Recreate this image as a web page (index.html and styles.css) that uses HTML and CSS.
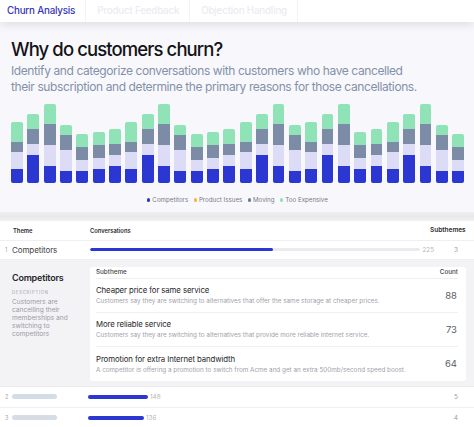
FILE: index.html
```html
<!DOCTYPE html>
<html lang="en">
<head>
<meta charset="utf-8">
<title>Churn Analysis</title>
<link rel="stylesheet" href="styles.css">
</head>
<body>
<div class="page">
  <nav class="tabs">
    <div class="tab active">Churn Analysis</div>
    <div class="tab">Product Feedback</div>
    <div class="tab">Objection Handling</div>
  </nav>

  <section class="hero">
    <h1 class="title">Why do customers churn?</h1>
    <p class="lead">Identify and categorize conversations with customers who have cancelled<br>their subscription and determine the primary reasons for those cancellations.</p>

    <div class="chart">
      <div class="bar"><span class="seg exp" style="height:20px"></span><span class="seg mov" style="height:10px"></span><span class="seg prod" style="height:17.6px"></span><span class="seg comp" style="height:13.7px"></span></div>
      <div class="bar"><span class="seg exp" style="height:15px"></span><span class="seg mov" style="height:14.7px"></span><span class="seg prod" style="height:11.3px"></span><span class="seg comp" style="height:27.7px"></span></div>
      <div class="bar"><span class="seg exp" style="height:20px"></span><span class="seg mov" style="height:20.7px"></span><span class="seg prod" style="height:20.7px"></span><span class="seg comp" style="height:17.3px"></span></div>
      <div class="bar"><span class="seg exp" style="height:9.7px"></span><span class="seg mov" style="height:15.3px"></span><span class="seg prod" style="height:20.7px"></span><span class="seg comp" style="height:12.3px"></span></div>
      <div class="bar"><span class="seg exp" style="height:13.3px"></span><span class="seg mov" style="height:13px"></span><span class="seg prod" style="height:10.4px"></span><span class="seg comp" style="height:12.3px"></span></div>
      <div class="bar"><span class="seg exp" style="height:12.7px"></span><span class="seg mov" style="height:13px"></span><span class="seg prod" style="height:11.6px"></span><span class="seg comp" style="height:13.7px"></span></div>
      <div class="bar"><span class="seg exp" style="height:15px"></span><span class="seg mov" style="height:11.6px"></span><span class="seg prod" style="height:10.4px"></span><span class="seg comp" style="height:17.3px"></span></div>
      <div class="bar"><span class="seg exp" style="height:20px"></span><span class="seg mov" style="height:10px"></span><span class="seg prod" style="height:17.6px"></span><span class="seg comp" style="height:13.7px"></span></div>
      <div class="bar"><span class="seg exp" style="height:15px"></span><span class="seg mov" style="height:14.7px"></span><span class="seg prod" style="height:11.3px"></span><span class="seg comp" style="height:27.7px"></span></div>
      <div class="bar"><span class="seg exp" style="height:20px"></span><span class="seg mov" style="height:20.7px"></span><span class="seg prod" style="height:20.7px"></span><span class="seg comp" style="height:17.3px"></span></div>
      <div class="bar"><span class="seg exp" style="height:9.7px"></span><span class="seg mov" style="height:15.3px"></span><span class="seg prod" style="height:20.7px"></span><span class="seg comp" style="height:12.3px"></span></div>
      <div class="bar"><span class="seg exp" style="height:13.3px"></span><span class="seg mov" style="height:13px"></span><span class="seg prod" style="height:10.4px"></span><span class="seg comp" style="height:12.3px"></span></div>
      <div class="bar"><span class="seg exp" style="height:12.7px"></span><span class="seg mov" style="height:13px"></span><span class="seg prod" style="height:11.6px"></span><span class="seg comp" style="height:13.7px"></span></div>
      <div class="bar"><span class="seg exp" style="height:15px"></span><span class="seg mov" style="height:11.6px"></span><span class="seg prod" style="height:10.4px"></span><span class="seg comp" style="height:17.3px"></span></div>
      <div class="bar"><span class="seg exp" style="height:20px"></span><span class="seg mov" style="height:10px"></span><span class="seg prod" style="height:17.6px"></span><span class="seg comp" style="height:13.7px"></span></div>
      <div class="bar"><span class="seg exp" style="height:15px"></span><span class="seg mov" style="height:14.7px"></span><span class="seg prod" style="height:11.3px"></span><span class="seg comp" style="height:27.7px"></span></div>
      <div class="bar"><span class="seg exp" style="height:20px"></span><span class="seg mov" style="height:20.7px"></span><span class="seg prod" style="height:20.7px"></span><span class="seg comp" style="height:17.3px"></span></div>
      <div class="bar"><span class="seg exp" style="height:9.7px"></span><span class="seg mov" style="height:15.3px"></span><span class="seg prod" style="height:20.7px"></span><span class="seg comp" style="height:12.3px"></span></div>
      <div class="bar"><span class="seg exp" style="height:20px"></span><span class="seg mov" style="height:10px"></span><span class="seg prod" style="height:17.6px"></span><span class="seg comp" style="height:13.7px"></span></div>
      <div class="bar"><span class="seg exp" style="height:15px"></span><span class="seg mov" style="height:14.7px"></span><span class="seg prod" style="height:11.3px"></span><span class="seg comp" style="height:27.7px"></span></div>
      <div class="bar"><span class="seg exp" style="height:20px"></span><span class="seg mov" style="height:20.7px"></span><span class="seg prod" style="height:20.7px"></span><span class="seg comp" style="height:17.3px"></span></div>
      <div class="bar"><span class="seg exp" style="height:12.7px"></span><span class="seg mov" style="height:13px"></span><span class="seg prod" style="height:11.6px"></span><span class="seg comp" style="height:13.7px"></span></div>
      <div class="bar"><span class="seg exp" style="height:15px"></span><span class="seg mov" style="height:11.6px"></span><span class="seg prod" style="height:10.4px"></span><span class="seg comp" style="height:17.3px"></span></div>
      <div class="bar"><span class="seg exp" style="height:20px"></span><span class="seg mov" style="height:10px"></span><span class="seg prod" style="height:17.6px"></span><span class="seg comp" style="height:13.7px"></span></div>
      <div class="bar"><span class="seg exp" style="height:15px"></span><span class="seg mov" style="height:14.7px"></span><span class="seg prod" style="height:11.3px"></span><span class="seg comp" style="height:27.7px"></span></div>
      <div class="bar"><span class="seg exp" style="height:20px"></span><span class="seg mov" style="height:20.7px"></span><span class="seg prod" style="height:20.7px"></span><span class="seg comp" style="height:17.3px"></span></div>
      <div class="bar"><span class="seg exp" style="height:9.7px"></span><span class="seg mov" style="height:15.3px"></span><span class="seg prod" style="height:20.7px"></span><span class="seg comp" style="height:12.3px"></span></div>
      <div class="bar"><span class="seg exp" style="height:13.3px"></span><span class="seg mov" style="height:13px"></span><span class="seg prod" style="height:10.4px"></span><span class="seg comp" style="height:12.3px"></span></div>
    </div>

    <div class="legend">
      <span class="legend-item"><i class="dot comp"></i>Competitors</span>
      <span class="legend-item"><i class="dot issue"></i>Product Issues</span>
      <span class="legend-item"><i class="dot mov"></i>Moving</span>
      <span class="legend-item"><i class="dot exp"></i>Too Expensive</span>
    </div>
  </section>

  <div class="band"></div>

  <section class="table">
    <div class="row head">
      <span class="num"></span>
      <span class="theme">Theme</span>
      <span class="conv">Conversations</span>
      <span class="subs">Subthemes</span>
    </div>

    <div class="row first">
      <span class="num">1</span>
      <span class="theme name">Competitors</span>
      <span class="conv">
        <span class="track"><span class="fill" style="width:55.5%"></span></span>
        <span class="val">225</span>
      </span>
      <span class="subs">3</span>
    </div>

    <div class="detail">
      <div class="detail-side">
        <div class="detail-title">Competitors</div>
        <div class="detail-label">DESCRIPTION</div>
        <div class="detail-text">Customers are<br>cancelling their<br>memberships and<br>switching to<br>competitors</div>
      </div>
      <div class="sub-card">
        <div class="sub-head"><span>Subtheme</span><span>Count</span></div>
        <div class="sub-item">
          <div class="sub-body">
            <div class="sub-title">Cheaper price for same service</div>
            <div class="sub-desc">Customers say they are switching to alternatives that offer the same storage at cheaper prices.</div>
          </div>
          <div class="sub-count">88</div>
        </div>
        <div class="sub-item">
          <div class="sub-body">
            <div class="sub-title">More reliable service</div>
            <div class="sub-desc">Customers say they are switching to alternatives that provide more reliable internet service.</div>
          </div>
          <div class="sub-count">73</div>
        </div>
        <div class="sub-item">
          <div class="sub-body">
            <div class="sub-title">Promotion for extra Internet bandwidth</div>
            <div class="sub-desc">A competitor is offering a promotion to switch from Acme and get an extra 500mb/second speed boost.</div>
          </div>
          <div class="sub-count">64</div>
        </div>
      </div>
    </div>

    <div class="row short">
      <span class="num">2</span>
      <span class="theme"><span class="skeleton"></span></span>
      <span class="conv"><span class="solo" style="width:60px"></span><span class="val">148</span></span>
      <span class="subs">5</span>
    </div>
    <div class="row short last">
      <span class="num">3</span>
      <span class="theme"><span class="skeleton"></span></span>
      <span class="conv"><span class="solo" style="width:56px"></span><span class="val">136</span></span>
      <span class="subs">4</span>
    </div>
  </section>
</div>
</body>
</html>
```

FILE: styles.css
```css
* { box-sizing: border-box; margin: 0; padding: 0; }

html, body {
  width: 474px;
  height: 427px;
  overflow: hidden;
  background: #ffffff;
}

body {
  font-family: Inter, "Noto Sans", "Liberation Sans", sans-serif;
  color: #18181b;
}

.page {
  display: flex;
  flex-direction: column;
}

/* Tabs */
.tabs {
  display: flex;
  height: 22px;
  align-items: center;
  background: #ffffff;
  position: relative;
  z-index: 2;
  box-shadow: 0 3px 9px rgba(0, 0, 0, 0.1);
}

.tab {
  font-size: 9.8px;
  font-weight: 500;
  letter-spacing: -0.2px;
  color: #ebebf0;
  padding: 0 10px 0 11px;
  border-right: 1px solid #f3f3f6;
  line-height: 22px;
}

.tab.active {
  color: #3535b8;
  padding-left: 7px;
}

/* Hero */
.hero {
  background: #f8f8fc;
  padding: 15.4px 10px 7px 11px;
  display: flex;
  flex-direction: column;
}

.title {
  font-size: 18.5px;
  line-height: 24px;
  font-weight: 500;
  letter-spacing: -0.9px;
  color: #131316;
}

.lead {
  margin-top: 1.6px;
  font-size: 12px;
  line-height: 16px;
  letter-spacing: -0.4px;
  color: #8391a9;
  white-space: nowrap;
}

.chart {
  margin-top: 8px;
  height: 80px;
  display: flex;
  align-items: flex-end;
  gap: 4.5px;
}

.bar {
  flex: 1;
  display: flex;
  flex-direction: column;
  border-radius: 2px;
  overflow: hidden;
}

.seg { display: block; width: 100%; }
.seg.exp { background: #8fe3b6; }
.seg.mov { background: #7c8ca6; }
.seg.prod { background: #dcdcf7; }
.seg.comp { background: #2c36d1; }

.legend {
  margin-top: 12px;
  height: 10px;
  display: flex;
  justify-content: center;
  align-items: center;
  gap: 5.5px;
  font-size: 6.2px;
  color: #7a7a85;
}

.legend-item {
  display: flex;
  align-items: center;
  gap: 2px;
}

.dot {
  display: inline-block;
  width: 3.2px;
  height: 3.2px;
  border-radius: 50%;
}

.dot.comp { background: #2c36d1; }
.dot.issue { background: #f3b63e; }
.dot.mov { background: #6e7c93; }
.dot.exp { background: #8fe3b6; }

.band {
  height: 9px;
  background: linear-gradient(180deg, #efeff2 0%, #e8e8eb 50%, #f1f1f3 100%);
}

/* Table */
.table {
  background: #ffffff;
  display: flex;
  flex-direction: column;
}

.row {
  display: grid;
  grid-template-columns: 12px 76px minmax(0, 1fr) 31px;
  align-items: center;
  height: 19px;
  border-bottom: 1px solid #efeff2;
  padding-right: 13px;
}

.row.head {
  height: 20px;
  font-size: 5.8px;
  font-weight: 600;
  color: #2a2a30;
}

.row.head .theme { padding-left: 1px; }
.row.head .conv { padding-left: 2px; }

.num {
  font-size: 5.5px;
  color: #a5a5ad;
  padding-left: 5px;
}

.name {
  font-size: 8px;
  color: #3f3f46;
  letter-spacing: -0.1px;
}

.conv {
  display: flex;
  align-items: center;
  gap: 2px;
  min-width: 0;
}

.row.first .conv {
  padding-left: 2px;
  margin-right: -4px;
}

.subs {
  text-align: right;
  font-size: 6.5px;
  color: #a0a0a8;
  padding-right: 3px;
}

.row.head .subs {
  color: #2a2a30;
  padding-right: 0;
}

.track {
  display: block;
  flex: 1;
  height: 3px;
  border-radius: 2px;
  background: #ebebef;
  overflow: hidden;
}

.fill {
  display: block;
  height: 100%;
  background: #2c36d1;
  border-radius: 2px;
}

.val {
  font-size: 6.3px;
  color: #b5b5bd;
}

/* Detail */
.detail {
  display: flex;
  background: #f3f3f6;
  padding: 7px 8px 5px 12px;
  border-bottom: 1px solid #ececf0;
}

.detail-side {
  width: 78px;
  flex: none;
  padding-top: 5.3px;
}

.detail-title {
  font-size: 9px;
  font-weight: 600;
  letter-spacing: -0.2px;
  color: #27272a;
  line-height: 12px;
}

.detail-label {
  margin-top: 5.4px;
  font-size: 4.2px;
  letter-spacing: 0.8px;
  color: #a1a1aa;
  line-height: 6px;
}

.detail-text {
  margin-top: 2.6px;
  font-size: 6.6px;
  line-height: 8px;
  color: #9b9ba4;
}

.sub-card {
  flex: 1;
  background: #ffffff;
  border-radius: 3px;
  padding: 0 8px 0 6px;
}

.sub-head {
  height: 12px;
  display: flex;
  justify-content: space-between;
  align-items: center;
  font-size: 6.3px;
  font-weight: 500;
  color: #3f3f46;
  border-bottom: 1px solid #efeff2;
}

.sub-item {
  height: 34px;
  display: flex;
  align-items: center;
  justify-content: space-between;
  border-bottom: 1px solid #efeff2;
}

.sub-item:last-child { border-bottom: none; }

.sub-body {
  display: flex;
  flex-direction: column;
  gap: 2px;
}

.sub-title {
  font-size: 7.8px;
  color: #27272a;
  letter-spacing: -0.1px;
  line-height: 10px;
}

.sub-desc {
  font-size: 6.33px;
  color: #a1a1aa;
  line-height: 8px;
}

.sub-count {
  font-size: 9.5px;
  color: #5b5b63;
  padding-right: 1px;
}

/* Short rows */
.row.short { height: 21px; }
.row.last { border-bottom: none; height: 20px; }

.skeleton {
  display: block;
  width: 45px;
  height: 5px;
  border-radius: 3px;
  background: #d6dce6;
}

.solo {
  display: block;
  height: 3.5px;
  border-radius: 2px;
  background: #2c36d1;
}
```
